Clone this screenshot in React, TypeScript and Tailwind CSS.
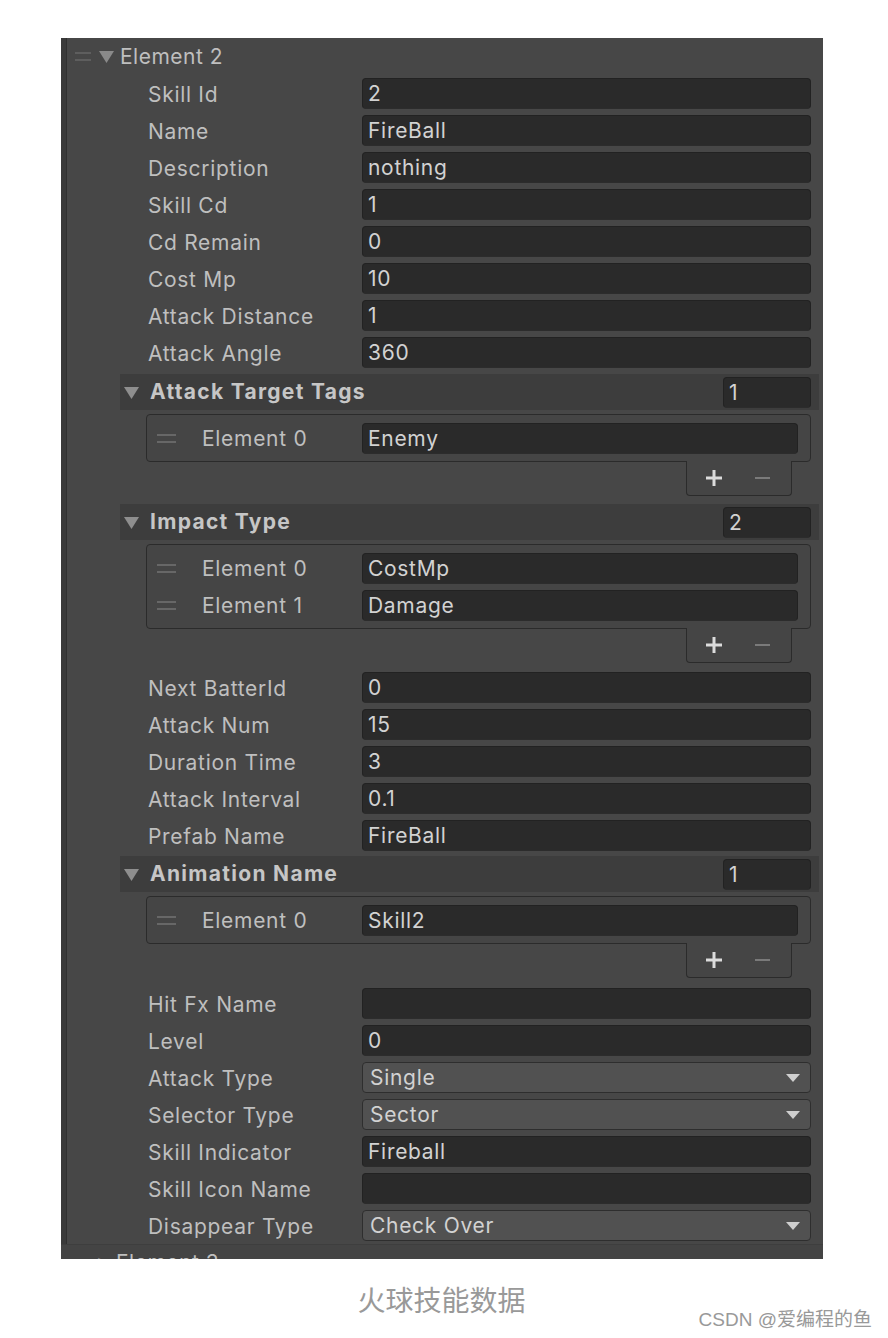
import React from 'react';

const font = { fontFamily: 'Inter, "Noto Sans", sans-serif' };

function Tri({ className = '' }: { className?: string }) {
  return (
    <svg width="15" height="13" viewBox="0 0 15 13" className={className}>
      <polygon points="0,1 15,1 7.5,13" fill="currentColor" />
    </svg>
  );
}

function Handle({ className = '' }: { className?: string }) {
  return (
    <span className={`flex flex-col gap-[5px] ${className}`}>
      <span className="block h-[2px] bg-current" />
      <span className="block h-[2px] bg-current" />
    </span>
  );
}

function Field({ value, className = '' }: { value: string; className?: string }) {
  return (
    <div
      className={`h-[31px] rounded-[4px] bg-[#2a2a2a] border border-[#222] border-b-[#2c2c2c] flex items-center px-[5px] pt-[1px] text-[#d2d2d2] text-[21px] tracking-[0.7px] ${className}`}
    >
      {value}
    </div>
  );
}

function Dropdown({ value }: { value: string }) {
  return (
    <div className="flex-1 h-[31px] rounded-[4px] bg-[#515151] border border-[#2e2e2e] flex items-center pl-[7px] pr-[10px] pt-[1px] text-[#d2d2d2] text-[21px] tracking-[0.7px]">
      <span className="flex-1">{value}</span>
      <svg width="14" height="8" viewBox="0 0 14 8">
        <polygon points="0,0 14,0 7,8" fill="#cfcfcf" />
      </svg>
    </div>
  );
}

function Row({ label, value, drop }: { label: string; value: string; drop?: boolean }) {
  return (
    <div className="h-[37px] flex items-center">
      <div className="w-[302px] pl-[88px] pt-[2px] text-[#bfbfbf] text-[21px] tracking-[0.7px]">{label}</div>
      <div className="flex-1 mr-[12px] flex">
        {drop ? <Dropdown value={value} /> : <Field value={value} className="flex-1" />}
      </div>
    </div>
  );
}

function ListBlock({ title, items, mt }: { title: string; items: string[]; mt: string }) {
  return (
    <div className={mt}>
      <div className="ml-[60px] mr-[4px] h-[36px] bg-[#3d3d3d] flex items-center pr-[8px]">
        <Tri className="ml-[4px] text-[#8e8e8e]" />
        <span className="ml-[11px] flex-1 font-bold text-[21px] tracking-[1.3px] text-[#c6c6c6]">{title}</span>
        <Field value={String(items.length)} className="w-[88px] h-[31px]" />
      </div>
      <div className="mt-[4px] ml-[86px] mr-[12px] rounded-[4px] border border-[#2b2b2b] bg-[#454545] pt-[5px] pb-[4px]">
        {items.map((v, i) => (
          <div key={i} className="h-[37px] flex items-center">
            <Handle className="ml-[10px] w-[19px] text-[#676767]" />
            <span className="ml-[26px] w-[160px] pt-[1px] text-[21px] tracking-[0.7px] text-[#bfbfbf]">Element {i}</span>
            <Field value={v} className="flex-1 mr-[12px]" />
          </div>
        ))}
      </div>
      <div className="ml-auto mr-[31px] -mt-px w-[106px] h-[35px] rounded-b-[4px] border-x border-b border-[#2b2b2b] bg-[#454545] flex items-center pl-[18px] gap-[32px]">
        <svg width="18" height="18" viewBox="0 0 18 18">
          <path d="M9 1v16M1 9h16" stroke="#dcdcdc" strokeWidth="3" />
        </svg>
        <span className="block w-[15px] h-[2px] bg-[#7a7a7a]" />
      </div>
    </div>
  );
}

export default function App() {
  return (
    <div className="w-[888px] h-[1338px] bg-white overflow-hidden" style={font}>
      <div className="pt-[38px] pl-[61px]">
        <div className="w-[762px] h-[1221px] bg-[#474747] flex overflow-hidden">
          <div className="w-[6px] bg-[#3a3a3a] border-r border-[#303030]" />
          <div className="flex-1 -ml-[7px] flex flex-col">
            <div className="h-[37px] flex items-center">
              <Handle className="ml-[15px] w-[16px] text-[#5e5e5e] gap-[4px]" />
              <Tri className="ml-[8px] text-[#8a8a8a]" />
              <span className="ml-[6px] text-[21px] tracking-[0.5px] text-[#bfbfbf]">Element 2</span>
            </div>
            <Row label="Skill Id" value="2" />
            <Row label="Name" value="FireBall" />
            <Row label="Description" value="nothing" />
            <Row label="Skill Cd" value="1" />
            <Row label="Cd Remain" value="0" />
            <Row label="Cost Mp" value="10" />
            <Row label="Attack Distance" value="1" />
            <Row label="Attack Angle" value="360" />
            <ListBlock title="Attack Target Tags" items={['Enemy']} mt="mt-[3px]" />
            <ListBlock title="Impact Type" items={['CostMp', 'Damage']} mt="mt-[8px]" />
            <div className="mt-[6px]">
              <Row label="Next BatterId" value="0" />
              <Row label="Attack Num" value="15" />
              <Row label="Duration Time" value="3" />
              <Row label="Attack Interval" value="0.1" />
              <Row label="Prefab Name" value="FireBall" />
            </div>
            <ListBlock title="Animation Name" items={['Skill2']} mt="mt-[2px]" />
            <div className="mt-[7px]">
              <Row label="Hit Fx Name" value="" />
              <Row label="Level" value="0" />
              <Row label="Attack Type" value="Single" drop />
              <Row label="Selector Type" value="Sector" drop />
              <Row label="Skill Indicator" value="Fireball" />
              <Row label="Skill Icon Name" value="" />
              <Row label="Disappear Type" value="Check Over" drop />
            </div>
            <div className="flex-1 border-t border-[#3e3e3e] bg-[#444] overflow-hidden">
              <div className="pt-[7px] flex items-start">
                <span className="ml-[38px] text-[16px] text-[#8a8a8a] leading-none">▸</span>
                <span className="ml-[10px] text-[21px] tracking-[0.5px] text-[#bfbfbf] leading-none">Element 3</span>
              </div>
            </div>
          </div>
        </div>
      </div>
      <div
        className="mt-[22px] pr-[5px] text-center text-[28px] leading-[36px] text-[#999]"
        style={{ fontFamily: '"Noto Sans CJK SC", sans-serif' }}
      >
        火球技能数据
      </div>
      <div
        className="-mt-[8px] text-right pr-[16px] text-[19px] leading-[22px] text-[#999]"
        style={{ fontFamily: '"Liberation Sans", "Noto Sans CJK SC", sans-serif' }}
      >
        CSDN @爱编程的鱼
      </div>
    </div>
  );
}
